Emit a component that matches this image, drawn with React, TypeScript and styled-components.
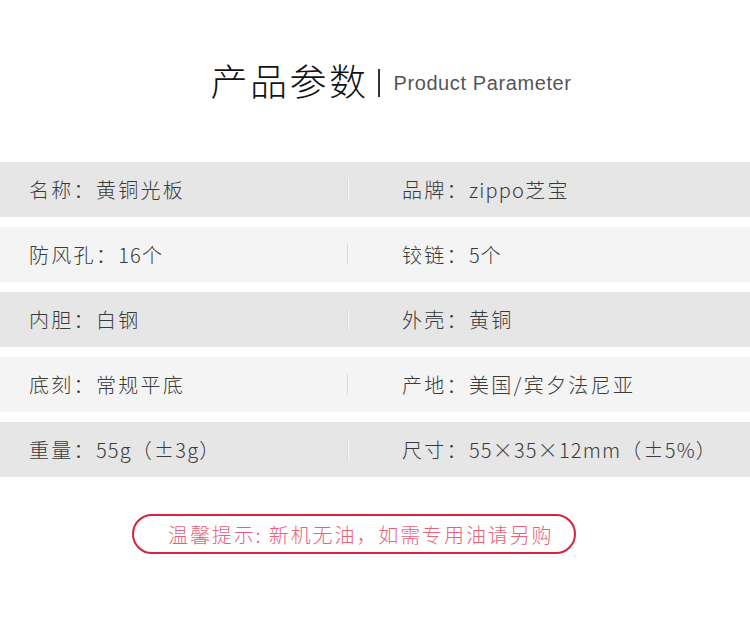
import styled, { createGlobalStyle } from "styled-components";

const GlobalStyle = createGlobalStyle`
    html, body {
        margin: 0;
        padding: 0;
        background: #ffffff;
    }

    body {
        font-family: "Noto Sans CJK SC", "Noto Sans", sans-serif;
        color: #333333;
    }
`;

const Page = styled.div`
    width: 750px;
    height: 629px;
    overflow: hidden;
    display: flex;
    flex-direction: column;
    align-items: center;
    box-sizing: border-box;
    padding-top: 52px;
`;

const Heading = styled.div`
    display: flex;
    align-items: center;
    height: 56px;
    margin-left: 32px;
`;

const HeadingTitle = styled.span`
    font-size: 37px;
    font-weight: 300;
    color: #111111;
    letter-spacing: 2.5px;
    line-height: 1;
`;

const HeadingBar = styled.span`
    width: 2px;
    height: 28px;
    margin: 6px 13px 0 10px;
    background: #333333;
`;

const HeadingSub = styled.span`
    font-family: "Liberation Sans", Arial, sans-serif;
    font-size: 20px;
    color: #555555;
    margin-top: 6px;
    letter-spacing: 0.6px;
`;

const Table = styled.div`
    width: 100%;
    display: flex;
    flex-direction: column;
    gap: 10px;
    margin-top: 54px;
`;

const Row = styled.div<{ $dark: boolean }>`
    display: flex;
    align-items: center;
    height: 55px;
    background: ${(p) => (p.$dark ? "#e6e6e6" : "#f4f4f4")};
`;

const Cell = styled.div`
    flex: 0 0 auto;
    font-size: 20px;
    font-weight: 300;
    color: #3a3a3a;
    line-height: 1;
    white-space: pre;
    letter-spacing: 2.3px;
`;

const LeftCell = styled(Cell)`
    width: 318px;
    padding-left: 29px;
`;

const RightCell = styled(Cell)`
    padding-left: 53px;
`;

// Latin runs in the reference sit tighter than the CJK characters
const Latin = styled.span`
    letter-spacing: 1.2px;
`;

const Divider = styled.div`
    width: 1px;
    height: 21px;
    background: #d8d8d8;
    border-right: 1px solid #fafafa;
`;

const Notice = styled.div`
    margin-top: 37px;
    margin-left: -42px;
    width: 444px;
    height: 40px;
    box-sizing: border-box;
    border: 2px solid #d8233c;
    border-radius: 20px;
    display: flex;
    align-items: center;
    padding-left: 34px;
    font-size: 20px;
    font-weight: 300;
    color: #e6627a;
    letter-spacing: 1.9px;
    white-space: pre;
`;

const params: [string, string][] = [
    ["名称：黄铜光板", "品牌：zippo芝宝"],
    ["防风孔：16个", "铰链：5个"],
    ["内胆：白钢", "外壳：黄铜"],
    ["底刻：常规平底", "产地：美国/宾夕法尼亚"],
    ["重量：55g（±3g）", "尺寸：55×35×12mm（±5%）"],
];

// split text so that runs of Latin letters / digits get their own spacing
const renderText = (text: string) =>
    text.split(/([A-Za-z0-9×±%]+)/).map((part, i) =>
        /^[A-Za-z0-9×±%]+$/.test(part) ? (
            <Latin key={i}>{part}</Latin>
        ) : (
            part
        )
    );

const App = () => {
    return (
        <>
            <GlobalStyle />
            <Page>
                <Heading>
                    <HeadingTitle>产品参数</HeadingTitle>
                    <HeadingBar />
                    <HeadingSub>Product Parameter</HeadingSub>
                </Heading>
                <Table>
                    {params.map(([left, right], i) => (
                        <Row key={i} $dark={i % 2 === 0}>
                            <LeftCell>{renderText(left)}</LeftCell>
                            <Divider />
                            <RightCell>{renderText(right)}</RightCell>
                        </Row>
                    ))}
                </Table>
                <Notice>温馨提示: 新机无油，如需专用油请另购</Notice>
            </Page>
        </>
    );
};

export default App;
